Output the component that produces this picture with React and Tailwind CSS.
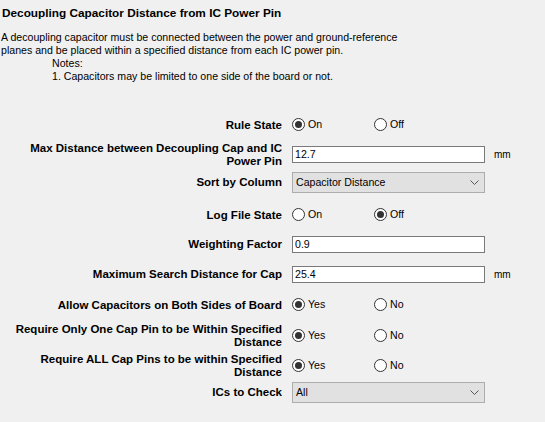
import React from "react";

const Radio = ({ checked, label }) => (
  <div className="flex items-center w-[82px]">
    <span className="w-[13px] h-[13px] rounded-full border border-[#333] bg-white flex items-center justify-center">
      {checked && <span className="w-[7px] h-[7px] rounded-full bg-[#333]" />}
    </span>
    <span className="ml-[3px]">{label}</span>
  </div>
);

const Chevron = () => (
  <svg width="9" height="5" viewBox="0 0 9 5" className="mr-[5px]">
    <path d="M0.5 0.5 L4.5 4.5 L8.5 0.5" fill="none" stroke="#555" strokeWidth="1" />
  </svg>
);

const Row = ({ label, className = "", children }) => (
  <div className={`flex ${className}`}>
    <div className="w-[283px] pr-[1px] text-right font-bold text-[11.5px] leading-[13px]">{label}</div>
    <div className="ml-[9px] flex items-center">{children}</div>
  </div>
);

const TextBox = ({ value, unit }) => (
  <>
    <div className="w-[193px] h-[17px] border border-[#7a7a7a] bg-white px-[2px] leading-[15px]">{value}</div>
    {unit && <span className="ml-[9px] text-[10px]">{unit}</span>}
  </>
);

const Select = ({ value }) => (
  <div className="w-[193px] h-[21px] border border-[#adadad] bg-[#e1e1e1] flex items-center justify-between pl-[3px]">
    <span>{value}</span>
    <Chevron />
  </div>
);

export default function App() {
  return (
    <div
      className="w-[545px] h-[422px] bg-[#f0f0f0] text-black text-[10.6px] overflow-hidden"
      style={{ fontFamily: '"Liberation Sans", Arial, sans-serif' }}
    >
      <div className="pl-[2px] pt-[6px] font-bold text-[11.8px] leading-[14px]">
        Decoupling Capacitor Distance from IC Power Pin
      </div>
      <div className="pl-[1px] mt-[11px] leading-[13px]">
        <div>A decoupling capacitor must be connected between the power and ground-reference</div>
        <div>planes and be placed within a specified distance from each IC power pin.</div>
        <div className="pl-[51px]">Notes:</div>
        <div className="pl-[51px]">1. Capacitors may be limited to one side of the board or not.</div>
      </div>

      <div className="mt-[32px]">
        <Row label="Rule State" className="h-[20px] items-center">
          <Radio checked label="On" />
          <Radio label="Off" />
        </Row>
        <Row
          label={<>Max Distance between Decoupling Cap and IC<br />Power Pin</>}
          className="mt-[7px] h-[27px] items-start"
        >
          <div className="mt-[4px] flex items-center">
            <TextBox value="12.7" unit="mm" />
          </div>
        </Row>
        <Row label="Sort by Column" className="mt-[3px] h-[21px] items-center">
          <Select value="Capacitor Distance" />
        </Row>
        <Row label="Log File State" className="mt-[12px] h-[20px] items-center">
          <Radio label="On" />
          <Radio checked label="Off" />
        </Row>
        <Row label="Weighting Factor" className="mt-[11px] h-[17px] items-center">
          <TextBox value="0.9" />
        </Row>
        <Row label="Maximum Search Distance for Cap" className="mt-[13px] h-[17px] items-center">
          <TextBox value="25.4" unit="mm" />
        </Row>
        <Row label="Allow Capacitors on Both Sides of Board" className="mt-[12px] h-[20px] items-center">
          <Radio checked label="Yes" />
          <Radio label="No" />
        </Row>
        <Row
          label={<>Require Only One Cap Pin to be Within Specified<br />Distance</>}
          className="mt-[7px] h-[27px] items-center"
        >
          <Radio checked label="Yes" />
          <Radio label="No" />
        </Row>
        <Row
          label={<>Require ALL Cap Pins to be within Specified<br />Distance</>}
          className="mt-[3px] h-[27px] items-center"
        >
          <Radio checked label="Yes" />
          <Radio label="No" />
        </Row>
        <Row label="ICs to Check" className="mt-[3px] h-[21px] items-center">
          <Select value="All" />
        </Row>
      </div>
    </div>
  );
}
